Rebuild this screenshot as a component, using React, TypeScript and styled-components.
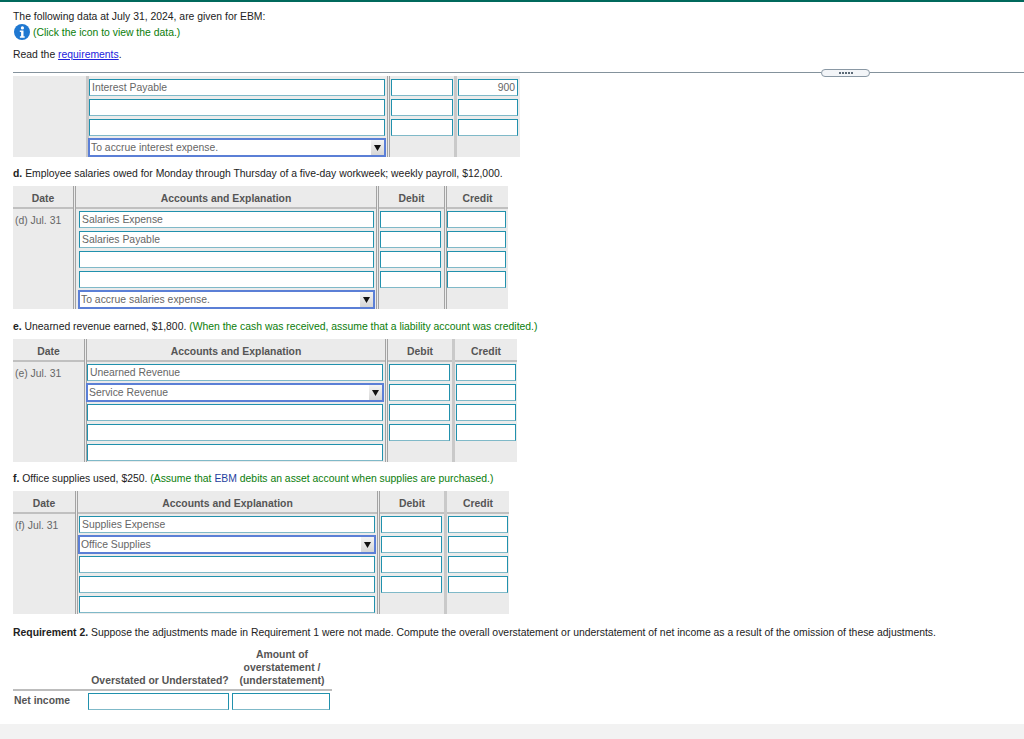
import React from "react";
import styled, { createGlobalStyle } from "styled-components";

const Global = createGlobalStyle`
  html, body { margin: 0; padding: 0; background: #fff; }
  body { font-family: "Liberation Sans", Arial, sans-serif; font-size: 10.4px; color: #333; }
`;
const Page = styled.div`
  width: 1024px; height: 739px; overflow: hidden; display: flex; flex-direction: column;
  border-top: 2px solid #00695c; box-sizing: border-box;
`;
const Content = styled.div`flex: 1; padding-left: 13px;`;
const Line = styled.div<{ $top: number }>`
  height: 14px; line-height: 14px; margin-top: ${p => p.$top}px;
  white-space: nowrap; color: #222;
  display: flex; align-items: center;
`;
const Green = styled.span`color: #0a7d0a; white-space: pre; padding-top: 2px;`;
const Bold = styled.b`color: #222; font-weight: 700; white-space: pre;`;
const Plain = styled.span`white-space: pre;`;
const Blue = styled.span`color: #1f3f9f;`;
const Hint = styled.span`color: #0a7d0a; white-space: pre;`;
const Link = styled.a`color: #2222dd; text-decoration: underline;`;
const InfoIcon = styled.svg`width: 16px; height: 16px; margin: 0 3px 0 1px; flex: none;`;
const Rule = styled.div`display: flex; align-items: center; height: 7px; margin-top: 7px;`;
const RuleLine = styled.div<{ $w?: number }>`
  height: 1px; background: #84929c; ${p => (p.$w ? `width: ${p.$w}px;` : "flex: 1;")}
`;
const More = styled.div`
  width: 47px; height: 6px; border: 1px solid #8a98a4; border-radius: 4px; background: #f3f5f8;
  display: flex; align-items: center; justify-content: center; gap: 1px;
`;
const Dot = styled.i`width: 2px; height: 2px; background: #5d6b78;`;

type Divider = "dark" | "light";
const Table = styled.div<{ $top: number }>`
  display: flex; width: fit-content; background: #ebebeb; margin-top: ${p => p.$top}px;
`;
const Col = styled.div<{ $w: number; $divider?: Divider }>`
  width: ${p => p.$w}px; flex: none; box-sizing: border-box; display: flex; flex-direction: column;
  ${p => p.$divider === "dark" && "border-left: 3px double #a3a3a3;"}
  ${p => p.$divider === "light" && "border-left: 3px solid #c9c9c9;"}
`;
const Head = styled.div`
  height: 21px; line-height: 26px; text-align: center; font-weight: 700; color: #555;
  border-bottom: 2px solid #c0c0c0; flex: none;
`;
const Stack = styled.div<{ $pl: number; $pt: number }>`
  display: flex; flex-direction: column; gap: 3px; padding: ${p => p.$pt}px 0 1px ${p => p.$pl}px;
`;
const Box = styled.div<{ $w: number; $align?: string }>`
  width: ${p => p.$w}px; height: 17px; box-sizing: border-box; border: 1px solid #2191ad;
  border-bottom-color: #7fb9c8; background: #fff; line-height: 15px; padding: 0 2px;
  color: #666; text-align: ${p => p.$align ?? "left"}; white-space: nowrap; overflow: hidden;
`;
const Select = styled.div<{ $w: number }>`
  width: ${p => p.$w}px; height: 19px; margin: -1px 0 -1px -1px; box-sizing: border-box;
  border: 2px solid #5b7fd6; background: #fff; display: flex; align-items: center; justify-content: space-between;
  color: #666; line-height: 15px; padding-left: 1px; white-space: nowrap;
`;
const Arrow = styled.div`
  width: 13px; height: 15px; background: linear-gradient(#f4f4f4, #d6d6d6); display: flex; align-items: center; justify-content: center;
`;
const Tri = styled.svg`width: 7px; height: 6px; display: block;`;
const DateText = styled.div`padding: 5px 0 0 2px; height: 18px; line-height: 14px; color: #666;`;
const Summary = styled.div<{ $top: number }>`
  margin-top: ${p => p.$top}px; height: 14px; line-height: 16px; color: #222; white-space: nowrap;
`;
const Small = styled.div`display: grid; grid-template-columns: 75px 144px 100px; width: 319px; margin-top: 9px;`;
const SmallHead = styled.div`
  display: flex; align-items: flex-end; justify-content: center; text-align: center;
  line-height: 13px; font-weight: 700; color: #555; padding-bottom: 2px;
  border-bottom: 2px solid #bdbdbd; height: 39px;
`;
const SmallRow = styled.div`padding-top: 2px;`;
const RowLabel = styled.div`font-weight: 700; color: #555; padding: 3px 0 0 1px; line-height: 14px;`;
const Band = styled.div`height: 15px; background: #f2f2f2; flex: none;`;

const Field = ({ w, text, align }: { w: number; text?: string; align?: string }) => (
  <Box $w={w} $align={align}>{text}</Box>
);
const Drop = ({ w, text }: { w: number; text: string }) => (
  <Select $w={w}>
    <span>{text}</span>
    <Arrow><Tri viewBox="0 0 7 6"><path d="M0 0h7L3.5 6z" fill="#111" /></Tri></Arrow>
  </Select>
);

type Row = { text?: string; drop?: boolean; noAmount?: boolean };
type JournalProps = {
  top: number;
  widths: [number, number, number, number];
  dividers: [Divider, Divider, Divider];
  pads: [number, number, number];
  boxW: [number, number, number];
  header?: boolean;
  date?: string;
  rows: Row[];
  credit?: string[];
};

function Journal({ top, widths, dividers, pads, boxW, header = true, date, rows, credit }: JournalProps) {
  const pt = header ? 2 : 3;
  const amounts = rows.filter(r => !r.noAmount);
  return (
    <Table $top={top}>
      <Col $w={widths[0]}>
        {header && <Head>Date</Head>}
        <DateText>{date}</DateText>
      </Col>
      <Col $w={widths[1]} $divider={dividers[0]}>
        {header && <Head>Accounts and Explanation</Head>}
        <Stack $pl={pads[0]} $pt={pt}>
          {rows.map((r, i) => r.drop
            ? <Drop key={i} w={boxW[0] + 2} text={r.text ?? ""} />
            : <Field key={i} w={boxW[0]} text={r.text} />)}
        </Stack>
      </Col>
      <Col $w={widths[2]} $divider={dividers[1]}>
        {header && <Head>Debit</Head>}
        <Stack $pl={pads[1]} $pt={pt}>
          {amounts.map((_, i) => <Field key={i} w={boxW[1]} />)}
        </Stack>
      </Col>
      <Col $w={widths[3]} $divider={dividers[2]}>
        {header && <Head>Credit</Head>}
        <Stack $pl={pads[2]} $pt={pt}>
          {amounts.map((_, i) => <Field key={i} w={boxW[2]} text={credit?.[i]} align="right" />)}
        </Stack>
      </Col>
    </Table>
  );
}

export default function App() {
  return (
    <Page>
      <Global />
      <Content>
        <Line $top={8}>The following data at July 31, 2024, are given for EBM:</Line>
        <Line $top={1}>
          <InfoIcon viewBox="0 0 16 16">
            <circle cx="8" cy="8" r="8" fill="#1f78d1" />
            <circle cx="8.4" cy="3.9" r="1.6" fill="#fff" />
            <path d="M5.8 6.5h3.7v5.7h1.2v1.5H5.9v-1.5h1.2V8H5.8z" fill="#fff" />
          </InfoIcon>
          <Green>(Click the icon to view the data.)</Green>
        </Line>
        <Line $top={9}><Plain>Read the </Plain><Link>requirements</Link>.</Line>
        <Rule>
          <RuleLine />
          <More><Dot /><Dot /><Dot /><Dot /><Dot /></More>
          <RuleLine $w={154} />
        </Rule>
        <Journal top={0} widths={[73, 301, 67, 66]} dividers={["light", "dark", "light"]} pads={[0, 1, 1]} boxW={[296, 62, 60]} header={false}
          rows={[{ text: "Interest Payable" }, {}, {}, { text: "To accrue interest expense.", drop: true, noAmount: true }]}
          credit={["900"]} />
        <Summary $top={9}><Bold>d. </Bold>Employee salaries owed for Monday through Thursday of a five-day workweek; weekly payroll, $12,000.</Summary>
        <Journal top={6} widths={[60, 303, 68, 64]} dividers={["dark", "dark", "dark"]} pads={[3, 1, 0]} boxW={[295, 61, 59]} date="(d) Jul. 31"
          rows={[{ text: "Salaries Expense" }, { text: "Salaries Payable" }, {}, {}, { text: "To accrue salaries expense.", drop: true, noAmount: true }]} />
        <Summary $top={10}><Bold>e. </Bold>Unearned revenue earned, $1,800. <Hint>(When the cash was received, assume that a liability account was credited.)</Hint></Summary>
        <Journal top={6} widths={[71, 301, 67, 65]} dividers={["dark", "dark", "light"]} pads={[0, 1, 1]} boxW={[296, 61, 60]} date="(e) Jul. 31"
          rows={[{ text: "Unearned Revenue" }, { text: "Service Revenue", drop: true }, {}, {}, { noAmount: true }]} />
        <Summary $top={9}><Bold>f. </Bold>Office supplies used, $250. <Hint>(Assume that <Blue>EBM</Blue> debits an asset account when supplies are purchased.)</Hint></Summary>
        <Journal top={6} widths={[62, 302, 67, 65]} dividers={["dark", "dark", "light"]} pads={[1, 1, 1]} boxW={[296, 61, 60]} date="(f) Jul. 31"
          rows={[{ text: "Supplies Expense" }, { text: "Office Supplies", drop: true }, {}, {}, { noAmount: true }]} />
        <Summary $top={11}><Bold>Requirement 2. </Bold>Suppose the adjustments made in Requirement 1 were not made. Compute the overall overstatement or understatement of net income as a result of the omission of these adjustments.</Summary>
        <Small>
          <SmallHead />
          <SmallHead>Overstated or Understated?</SmallHead>
          <SmallHead>Amount of<br />overstatement /<br />(understatement)</SmallHead>
          <RowLabel>Net income</RowLabel>
          <SmallRow><Field w={141} /></SmallRow>
          <SmallRow><Field w={98} /></SmallRow>
        </Small>
      </Content>
      <Band />
    </Page>
  );
}
